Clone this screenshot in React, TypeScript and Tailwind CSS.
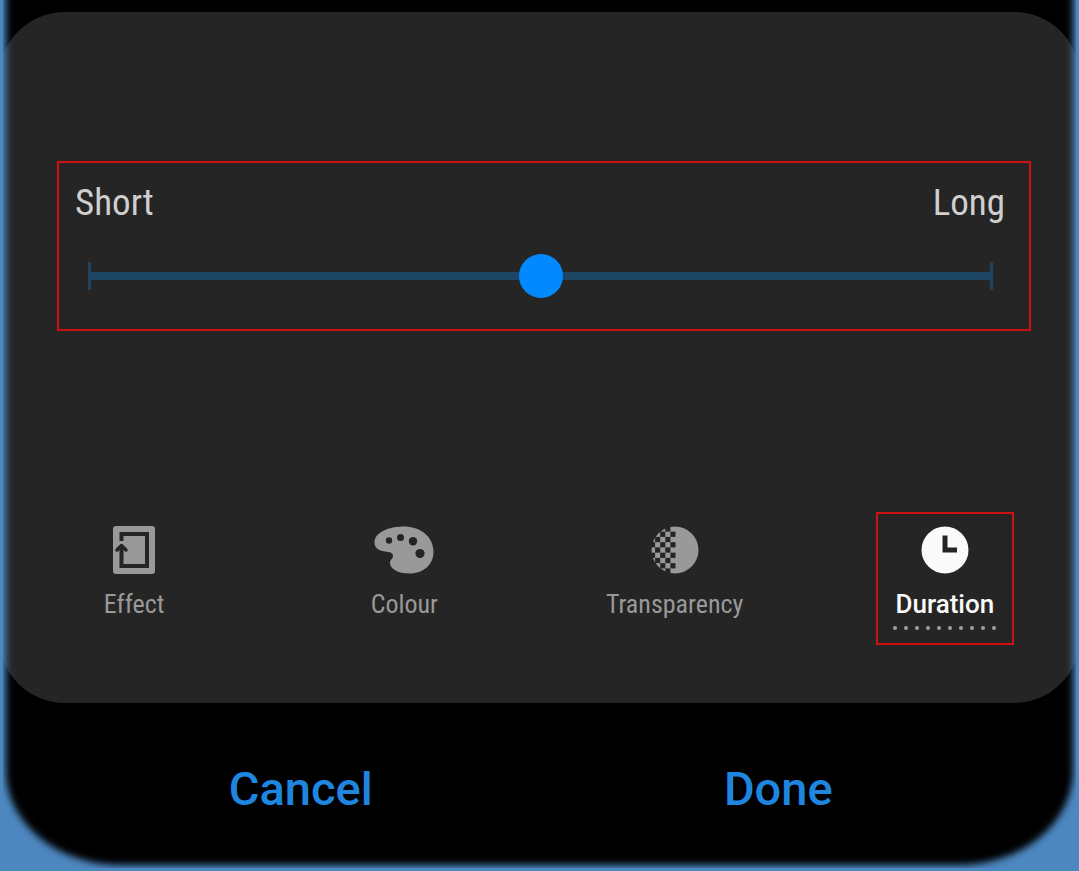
import { useState, type ReactNode } from 'react'
import clsx from 'clsx'

type Tab = { id: string; label: string; icon: ReactNode }

function EffectIcon() {
  return (
    <svg viewBox="0 0 42 48" className="h-12 w-[42px]" fill="none" aria-hidden="true">
      <rect width="42" height="48" rx="3" fill="currentColor" />
      <path d="M8.500 15V8H34v32H8.500V20" stroke="#252525" strokeWidth="4" />
      <path d="M4 24 8.500 19.500 13 24" stroke="#252525" strokeWidth="3.500" strokeLinecap="round" strokeLinejoin="round" />
    </svg>
  )
}

function ColourIcon() {
  return (
    <svg viewBox="0 0 60 48" className="h-12 w-[60px]" aria-hidden="true">
      <path
        fill="currentColor"
        d="M28 0.500C46 0 59.500 10 59.500 26c0 12.500-10 21.500-24 21.500C23.500 47.500 16 42.500 16 37c0-3.500 3-4.500 3-7 0-3.500-3-4-8-4.500C4 24.500 0.500 21.500 0.500 16.500 0.500 7 13 1 28 0.500Z"
      />
      <g fill="#252525">
        <circle cx="15" cy="14.500" r="3.200" />
        <circle cx="26.500" cy="11.500" r="3.500" />
        <circle cx="39" cy="15.200" r="4.200" />
        <circle cx="46" cy="27.500" r="4.600" />
      </g>
    </svg>
  )
}

function TransparencyIcon() {
  const cells: ReactNode[] = []
  for (let row = 0; row < 9; row++) {
    for (let col = 0; col < 5; col++) {
      if ((row + col) % 2 === 1) {
        cells.push(<rect key={`${row}-${col}`} x={-1 + col * 5.1} y={0.4 + row * 5.25} width="5.1" height="5.25" />)
      }
    }
  }
  return (
    <svg viewBox="0 0 48 48" className="size-12" aria-hidden="true">
      <circle cx="24" cy="24" r="23.500" fill="currentColor" />
      <g fill="#252525">{cells}</g>
    </svg>
  )
}

function DurationIcon() {
  return (
    <svg viewBox="0 0 48 48" className="size-12" aria-hidden="true">
      <circle cx="24" cy="24" r="23.500" fill="currentColor" />
      <path d="M24 9.500V24h12" fill="none" stroke="#252525" strokeWidth="5" />
    </svg>
  )
}

const tabs: Tab[] = [
  { id: 'effect', label: 'Effect', icon: <EffectIcon /> },
  { id: 'colour', label: 'Colour', icon: <ColourIcon /> },
  { id: 'transparency', label: 'Transparency', icon: <TransparencyIcon /> },
  { id: 'duration', label: 'Duration', icon: <DurationIcon /> },
]

function DurationSlider() {
  const [value, setValue] = useState(50)
  return (
    <div className="mr-[49px] ml-[58px] border-2 border-[#cc1212] pt-4 pb-[39px]">
      <div className="flex justify-between pr-6 pl-4 text-[37px] leading-12 text-[#cfcfcf]">
        <span id="short-label">Short</span>
        <span id="long-label">Long</span>
      </div>
      <div className="mt-[35px] mr-9 ml-[29px] flex">
        <input
          type="range"
          min={0}
          max={100}
          value={value}
          onChange={e => setValue(Number(e.target.value))}
          aria-label="Duration"
          aria-describedby="short-label long-label"
          className="h-7 w-full appearance-none border-x-3 border-[#21435d] bg-transparent outline-none [&::-webkit-slider-runnable-track]:h-2 [&::-webkit-slider-runnable-track]:bg-[#1d4564] [&::-webkit-slider-thumb]:-mt-[18px] [&::-webkit-slider-thumb]:size-11 [&::-webkit-slider-thumb]:appearance-none [&::-webkit-slider-thumb]:rounded-full [&::-webkit-slider-thumb]:bg-[#0289ff]"
        />
      </div>
    </div>
  )
}

export default function App() {
  const [active, setActive] = useState('duration')

  return (
    <div className="min-h-screen overflow-hidden bg-[#4d87c0] px-[3px] pb-[3px] font-['Roboto_Condensed',Roboto,sans-serif]">
      <main className="relative overflow-hidden bg-black pt-3">
        <section className="-mx-1 rounded-[66px] bg-[#252525] pt-[149px] pb-[58px]">
          <DurationSlider />
          <div role="tablist" className="mt-[181px] grid grid-cols-4">
            {tabs.map(tab => (
              <button
                key={tab.id}
                type="button"
                role="tab"
                aria-selected={active === tab.id}
                onClick={() => setActive(tab.id)}
                className={clsx(
                  'flex h-[133px] min-w-[138px] flex-col items-center justify-self-center border-2 pt-3 text-[26px] leading-8',
                  active === tab.id
                    ? 'border-[#cc1212] font-[Roboto,sans-serif] font-medium text-[#fafafa]'
                    : 'border-transparent text-[#999999]',
                )}
              >
                {tab.icon}
                <span className="mt-[14px]">{tab.label}</span>
                {active === tab.id && (
                  <span className="mt-[6px] flex gap-[7px]">
                    {Array.from({ length: 10 }, (_, i) => (
                      <span key={i} className="size-1 rounded-full bg-[#a0a0a0]" />
                    ))}
                  </span>
                )}
              </button>
            ))}
          </div>
        </section>
        <footer className="grid grid-cols-2 px-[59px] pt-[58px] pb-[51px] font-[Roboto,sans-serif] text-[47px] leading-14 font-medium text-[#1f86e0]">
          <button type="button">Cancel</button>
          <button type="button">Done</button>
        </footer>
        {/* soft glow along the screen edge, larger than the screen so only its inner rim shows */}
        <div className="pointer-events-none absolute -inset-x-[60px] -top-60 -bottom-[60px] rounded-b-[177px_157px] shadow-[inset_0_0_7px_63px_#4d87c0]" />
      </main>
    </div>
  )
}
